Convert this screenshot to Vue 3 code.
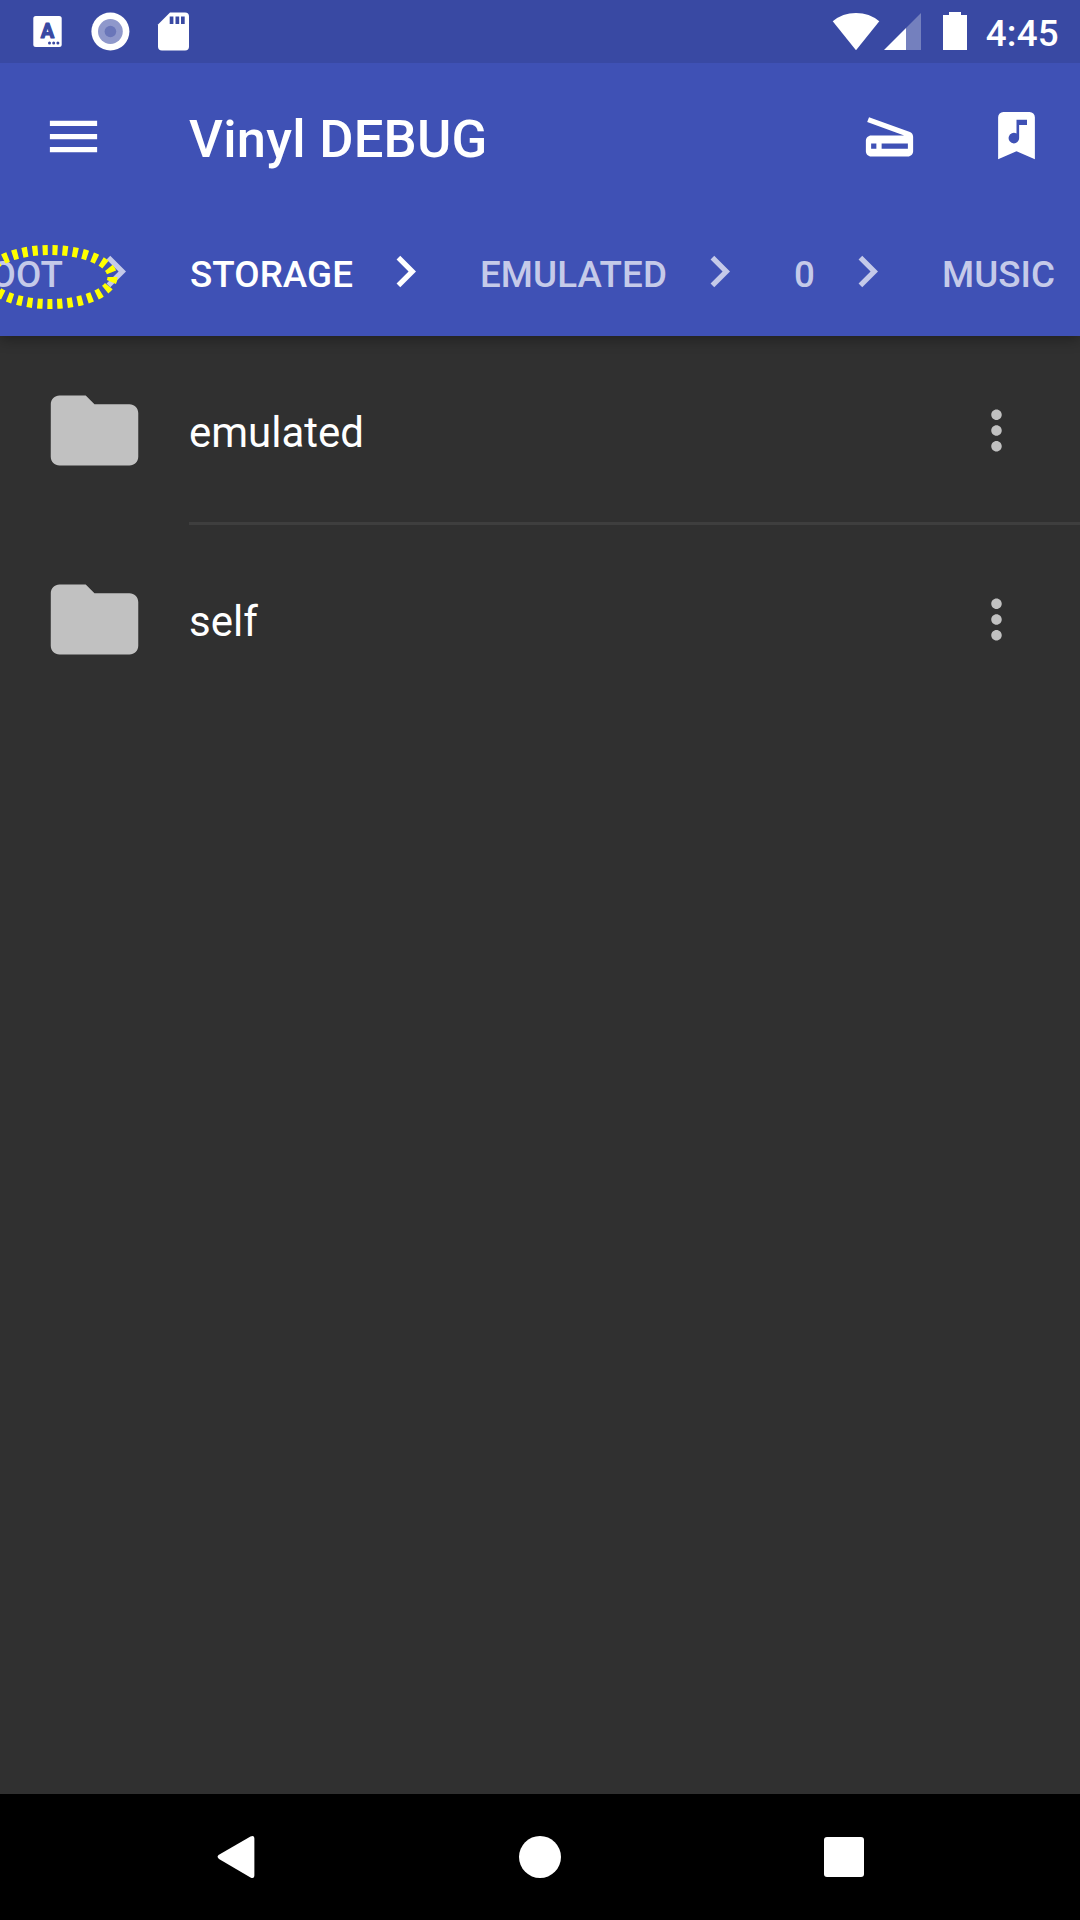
<script setup>
const crumbs = [
  { label: 'ROOT', first: true },
  { label: 'STORAGE', active: true },
  { label: 'EMULATED' },
  { label: '0' },
  { label: 'MUSIC', last: true },
]
const folders = ['emulated', 'self']
</script>

<template>
  <div class="screen">
    <div class="status">
      <svg class="notifications" width="200" height="63" viewBox="0 0 200 63">
        <rect x="33.3" y="16" width="28.4" height="31" rx="2.5" fill="#fff" />
        <text x="47.5" y="38.2" text-anchor="middle" class="badge-letter">A</text>
        <g fill="#3949a3">
          <circle cx="49.5" cy="43" r="1.5" />
          <circle cx="53.7" cy="43" r="1.5" />
          <circle cx="57.9" cy="43" r="1.5" />
        </g>
        <circle cx="110.4" cy="31.5" r="19" fill="#fff" />
        <circle cx="110.4" cy="31.5" r="12.4" fill="#8f98cb" />
        <circle cx="110.4" cy="31.5" r="5.8" fill="#6a76b9" />
        <path fill="#fff" d="M170 12.500H185a4 4 0 0 1 4 4V46.500a4 4 0 0 1-4 4H162a4 4 0 0 1-4-4V24.500Z" />
        <path fill="#3949a3" d="M169.700 16.500h3.700v7.500h-3.700zM175.500 16.500h3.700v7.500h-3.700zM181 16.500h3.700v7.500h-3.700z" />
      </svg>
      <div class="system">
        <svg width="140" height="63" viewBox="830 0 140 63" fill="#fff">
          <path d="M832.700 21.300Q842.500 13 856 13T879.300 21.300L856 50.300Z" />
          <path fill-opacity=".3" d="M921 13V50H906V28Z" />
          <path d="M884 50L906 28V50Z" />
          <path d="M949 12H961V15H967V50H943V15H949Z" />
        </svg>
        <span class="clock">4:45</span>
      </div>
    </div>

    <header class="toolbar">
      <svg class="icon" viewBox="0 0 24 24"><path d="M3 18h18v-2H3v2zm0-5h18v-2H3v2zm0-7v2h18V6H3z" /></svg>
      <h1>Vinyl DEBUG</h1>
      <svg class="icon scan" viewBox="0 0 24 24"><path d="M19.800 10.700L4.200 5l-.7 1.900L17.600 12H5c-1.100 0-2 .9-2 2v4c0 1.100.9 2 2 2h14c1.100 0 2-.9 2-2v-5.500c0-.8-.5-1.600-1.200-1.800zM7 17H5v-2h2v2zm12 0H9v-2h10v2z" /></svg>
      <svg class="icon bookmark" viewBox="0 0 24 24"><path fill-rule="evenodd" d="M17 3a2 2 0 0 1 2 2v16l-7-3-7 3V5a2 2 0 0 1 2-2zM11 15a2 2 0 0 0 2-2V8h3V6h-4v5.270A2 2 0 1 0 11 15z" /></svg>
    </header>

    <nav class="crumbs">
      <div v-for="c in crumbs" :key="c.label" class="crumb" :class="{ active: c.active, first: c.first }">
        <span>{{ c.label }}</span>
        <svg v-if="!c.last" class="icon" viewBox="0 0 24 24"><path d="M10 6L8.590 7.410 13.170 12l-4.580 4.590L10 18l6-6z" /></svg>
      </div>
      <svg class="marker" width="130" height="80" viewBox="0 237 130 80">
        <ellipse cx="50" cy="277" rx="62.5" ry="27" pathLength="290" />
      </svg>
    </nav>

    <main class="list">
      <div v-for="f in folders" :key="f" class="row">
        <svg class="folder" viewBox="0 0 24 24"><path d="M10 4H4c-1.100 0-1.990.9-1.990 2L2 18c0 1.100.9 2 2 2h16c1.100 0 2-.9 2-2V8c0-1.100-.9-2-2-2h-8l-2-2z" /></svg>
        <div class="body">
          <span>{{ f }}</span>
          <svg class="icon more" viewBox="0 0 24 24"><path d="M12 8c1.100 0 2-.9 2-2s-.9-2-2-2-2 .9-2 2 .9 2 2 2zm0 2c-1.100 0-2 .9-2 2s.9 2 2 2 2-.9 2-2-.9-2-2-2zm0 6c-1.100 0-2 .9-2 2s.9 2 2 2 2-.9 2-2-.9-2-2-2z" /></svg>
        </div>
      </div>
    </main>

    <footer class="navbar">
      <svg width="44" height="44" viewBox="0 0 44 44"><path d="M4.500 20L36.500 1.500Q40.400 -.3 40.400 4V40Q40.400 44.300 36.500 42.500L5 24Q2.500 22 4.500 20Z" /></svg>
      <svg width="44" height="44" viewBox="0 0 44 44"><circle cx="22" cy="22" r="21" /></svg>
      <svg width="44" height="44" viewBox="0 0 44 44"><rect x="2" y="2" width="40" height="40" rx="3" /></svg>
    </footer>
  </div>
</template>

<style>
body {
  margin: 0;
  background: #303030;
}
</style>

<style scoped>
.screen {
  width: 1080px;
  height: 1920px;
  display: flex;
  flex-direction: column;
  overflow: hidden;
  background: #303030;
  color: #fff;
  font-family: Roboto, "Noto Sans", sans-serif;
}
svg {
  display: block;
  flex: none;
}
.status {
  height: 63px;
  background: #3949a3;
  display: flex;
  justify-content: space-between;
}
.badge-letter {
  font-size: 20px;
  font-weight: 700;
  fill: #3949a3;
  stroke: #3949a3;
  stroke-width: 1.2px;
  stroke-linejoin: round;
}
.system {
  display: flex;
  padding-right: 21px;
}
.clock {
  margin-left: 16px;
  font-size: 36.75px;
  font-weight: 500;
  letter-spacing: 0.25px;
  line-height: 68px;
}
.icon {
  width: 63px;
  height: 63px;
  fill: currentColor;
}
.toolbar {
  position: relative;
  z-index: 2;
  height: 147px;
  box-sizing: border-box;
  padding: 0 32px 0 42px;
  background: #3f51b5;
  display: flex;
  align-items: center;
}
h1 {
  flex: 1;
  margin: 5px 0 0 84px;
  font-size: 52.5px;
  font-weight: 500;
  letter-spacing: 0.25px;
  line-height: 62px;
}
.scan {
  margin: 0 64px 2px 0;
}
.bookmark {
  margin-bottom: 2px;
}
.crumbs {
  position: relative;
  z-index: 1;
  height: 126px;
  background: #3f51b5;
  display: flex;
  gap: 43px;
  box-shadow: 0 4px 12px rgba(0, 0, 0, 0.3);
}
.crumb {
  display: flex;
  flex: none;
  gap: 21px;
  color: #c5cae9;
  font-size: 36.75px;
  font-weight: 500;
  letter-spacing: 0.07px;
  line-height: 129px;
}
.crumb .icon {
  margin-top: 30px;
}
.crumb.first {
  width: 147px;
  justify-content: flex-end;
}
.crumb.active {
  color: #fff;
}
.marker {
  position: absolute;
  left: 0;
  top: 27px;
}
.marker ellipse {
  fill: none;
  stroke: #ff0;
  stroke-width: 10;
  stroke-dasharray: 5.2 4.8;
}
.list {
  flex: 1;
}
.row {
  height: 189px;
  padding-left: 42px;
  display: flex;
  align-items: center;
}
.folder {
  width: 105px;
  height: 105px;
  fill: #c1c1c1;
}
.body {
  flex: 1;
  height: 189px;
  box-sizing: border-box;
  margin-left: 42px;
  padding-right: 52px;
  display: flex;
  align-items: center;
  justify-content: space-between;
  font-size: 42px;
  line-height: 50px;
}
.row:not(:last-child) .body {
  box-shadow: inset 0 -3px #3e3e3e;
}
.body span {
  padding-top: 5px;
}
.more {
  color: #c1c1c1;
}
.navbar {
  height: 126px;
  background: #000;
  display: flex;
  align-items: center;
  justify-content: center;
  gap: 260px;
}
.navbar svg {
  fill: #fff;
}
</style>
